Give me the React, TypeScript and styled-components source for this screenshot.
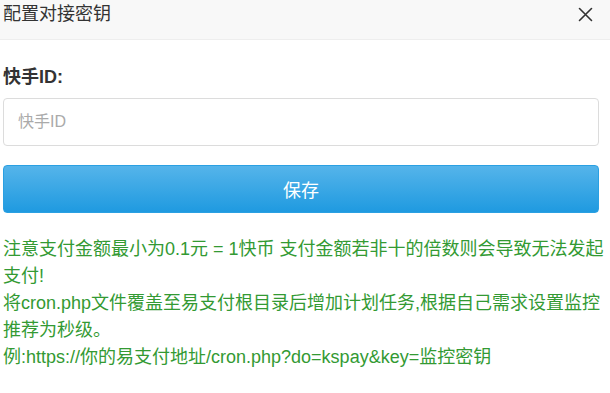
import * as React from 'react';
import styled, { createGlobalStyle } from 'styled-components';

const GlobalStyle = createGlobalStyle`
	html, body {
		margin: 0;
		padding: 0;
		background: #fff;
	}
	body {
		font-family: "Liberation Sans", "Noto Sans CJK SC", sans-serif;
	}
`;

const Dialog = styled.div`
	width: 610px;
	height: 393px;
	background: #fff;
	overflow: hidden;
`;

const Header = styled.div`
	display: flex;
	align-items: flex-start;
	justify-content: space-between;
	height: 39px;
	background: #f8f8f8;
	border-bottom: 1px solid #eee;
	padding: 0 17px 0 3px;
	box-sizing: content-box;
`;

const Title = styled.div`
	font-size: 18px;
	line-height: 28px;
	color: #333;
`;

const CloseButton = styled.button`
	display: flex;
	align-items: center;
	justify-content: center;
	width: 16px;
	height: 28px;
	padding: 0;
	border: none;
	background: none;
	cursor: pointer;
	color: #333;
`;

const Body = styled.div`
	display: flex;
	flex-direction: column;
	padding: 24px 11px 0 3px;
`;

const FieldLabel = styled.label`
	font-size: 18px;
	font-weight: bold;
	line-height: 26px;
	color: #333;
`;

const TextInput = styled.input`
	box-sizing: border-box;
	margin-top: 8px;
	height: 48px;
	width: 100%;
	padding: 0 14px;
	border: 1px solid #dcdcdc;
	border-radius: 4px;
	font-family: inherit;
	font-size: 16px;
	color: #333;
	outline: none;

	&::placeholder {
		color: #aaa;
	}
`;

const SaveButton = styled.button`
	box-sizing: border-box;
	margin-top: 19px;
	height: 48px;
	width: 100%;
	border: 1px solid #2aa0e2;
	border-radius: 4px;
	background: linear-gradient(to bottom, #55b4ea, #1f9ae0);
	color: #fff;
	font-family: inherit;
	font-size: 18px;
	cursor: pointer;
`;

const Notice = styled.div`
	margin: 23px -8px 0 0;
	font-size: 18px;
	line-height: 27px;
	color: #339a33;
`;

export default function App() {
	return (
		<>
			<GlobalStyle />
			<Dialog>
				<Header>
					<Title>配置对接密钥</Title>
					<CloseButton aria-label="关闭">
						<svg width="15" height="15" viewBox="0 0 15 15" fill="none" stroke="currentColor" strokeWidth="1.6" strokeLinecap="round">
							<path d="M1.5 1.5 L13.5 13.5 M13.5 1.5 L1.5 13.5" />
						</svg>
					</CloseButton>
				</Header>
				<Body>
					<FieldLabel htmlFor="ks-id">快手ID:</FieldLabel>
					<TextInput id="ks-id" placeholder="快手ID" />
					<SaveButton type="button">保存</SaveButton>
					<Notice>
						注意支付金额最小为0.1元 = 1快币 支付金额若非十的倍数则会导致无法发起支付!
						<br />
						将cron.php文件覆盖至易支付根目录后增加计划任务,根据自己需求设置监控推荐为秒级。
						<br />
						例:https://你的易支付地址/cron.php?do=kspay&amp;key=监控密钥
					</Notice>
				</Body>
			</Dialog>
		</>
	);
}
